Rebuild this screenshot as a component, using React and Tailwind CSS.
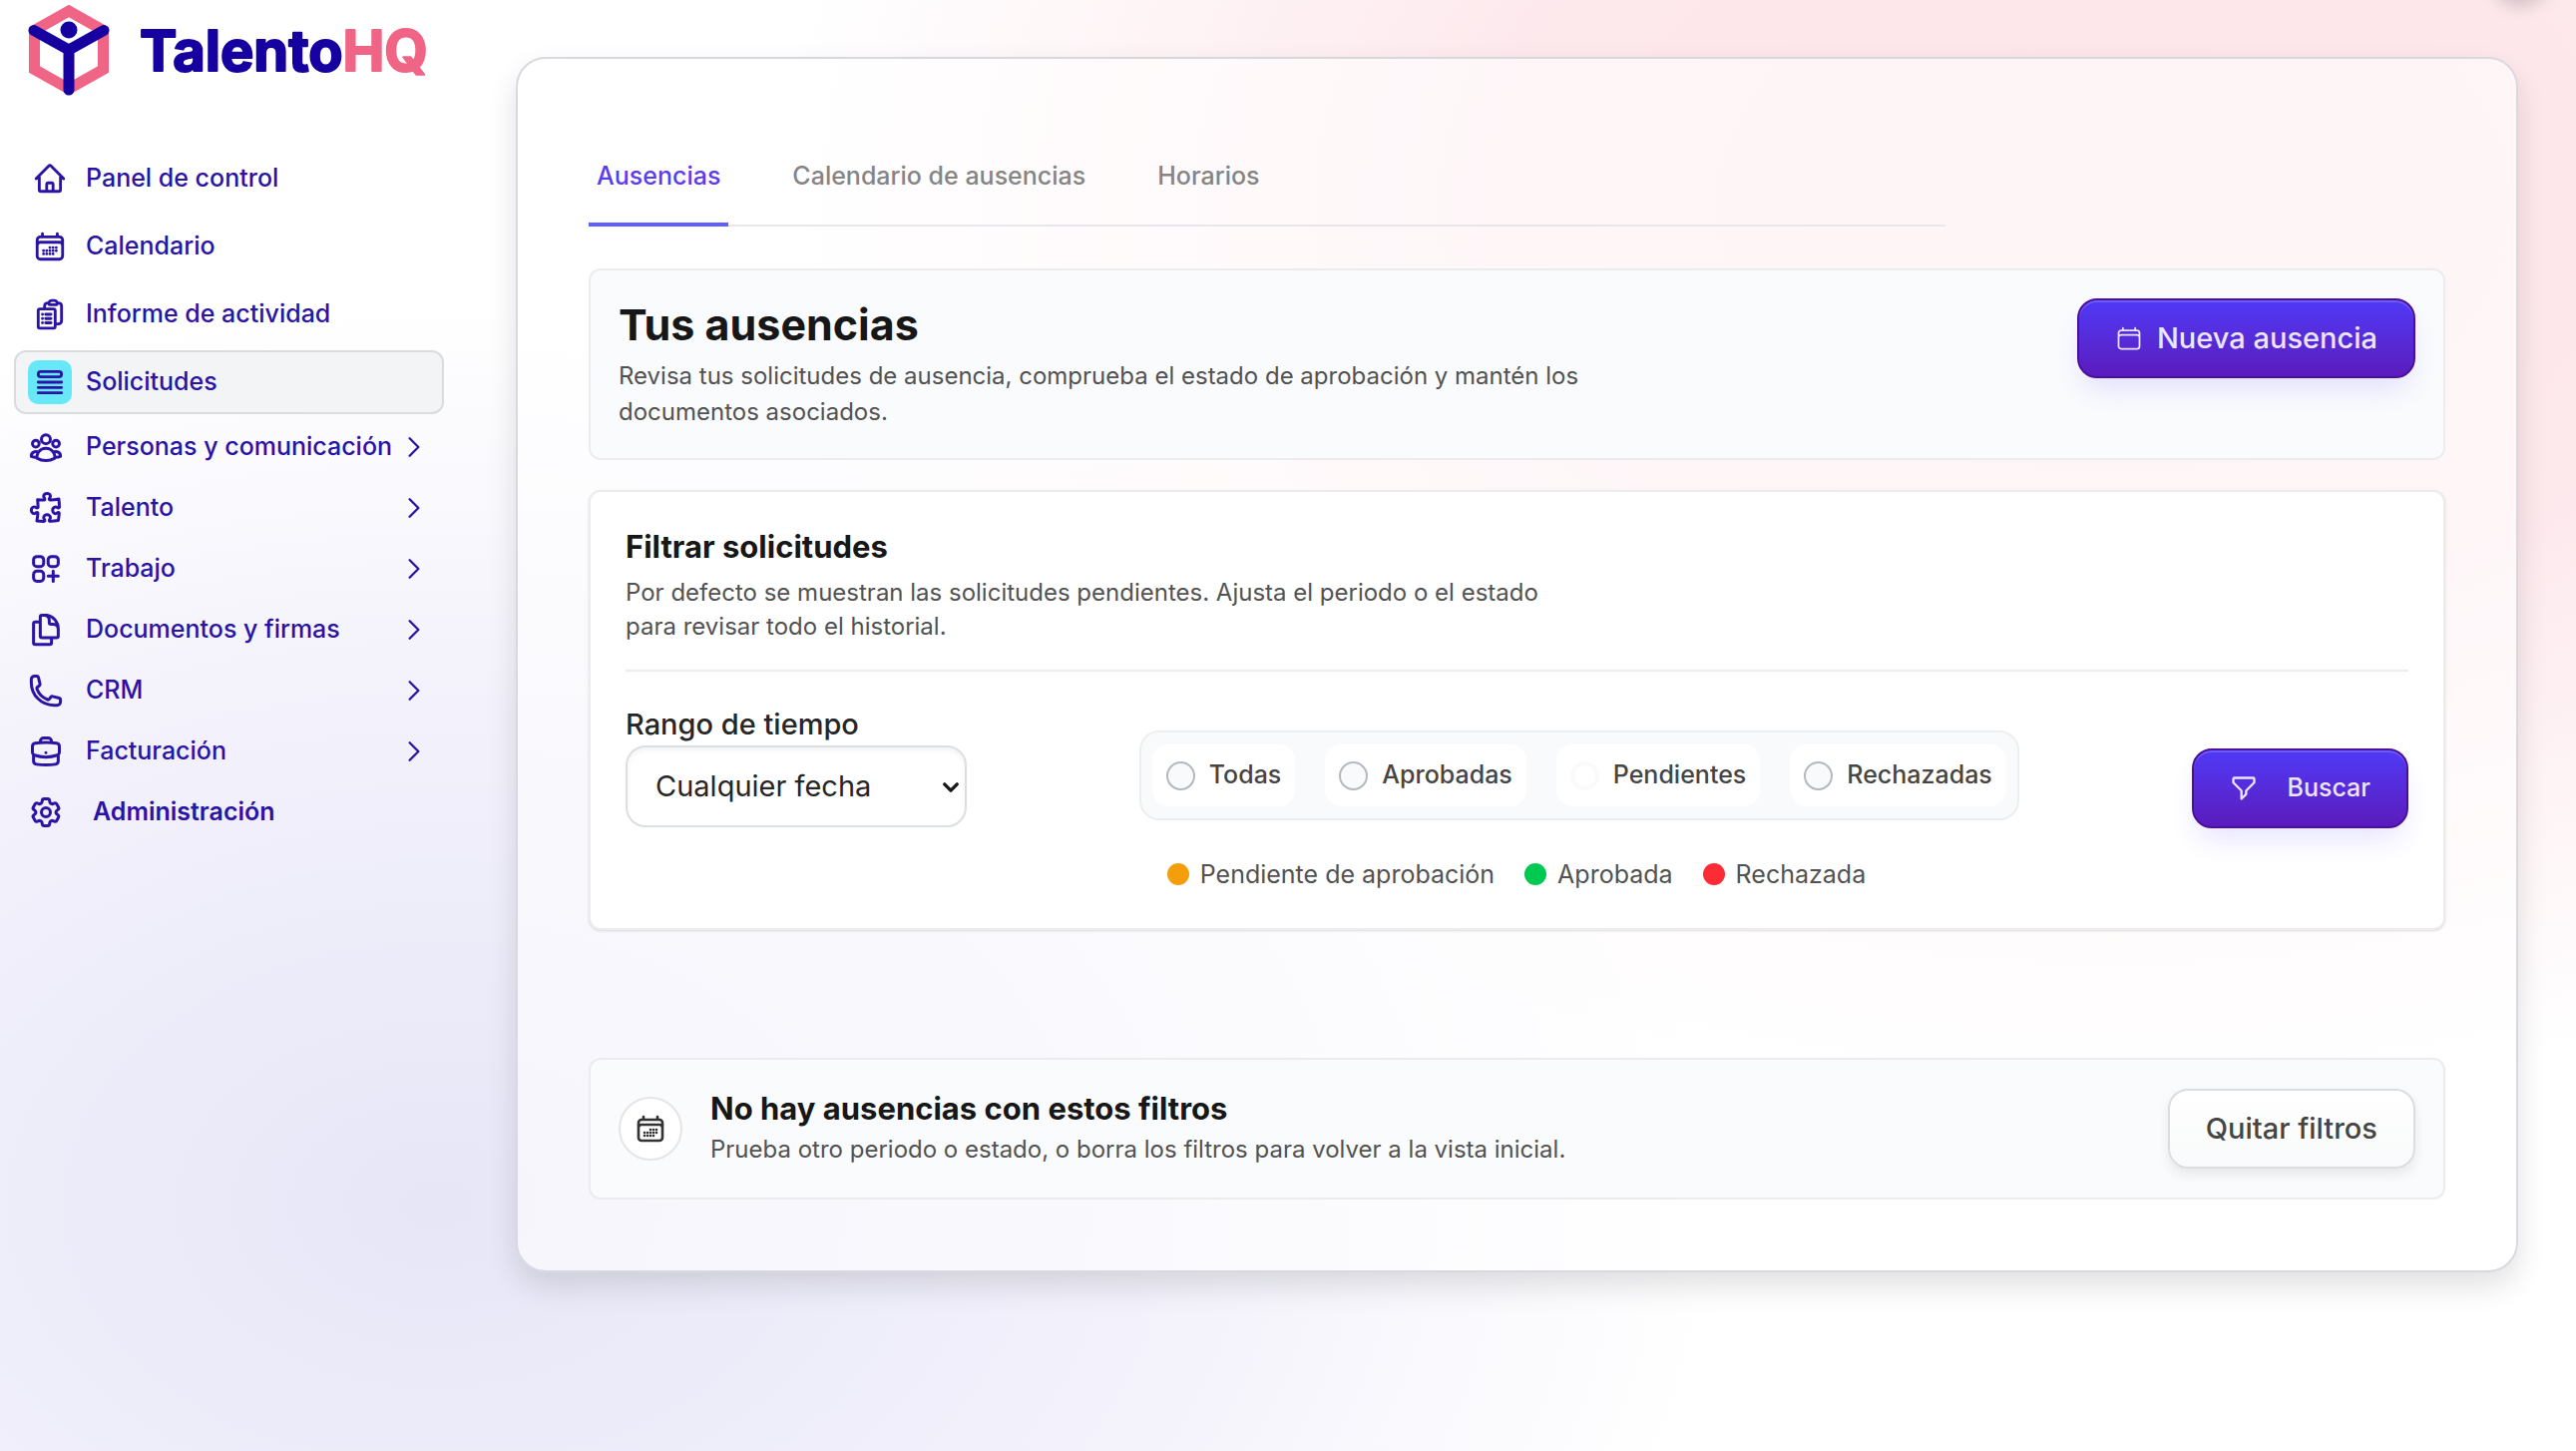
import { useState } from "react";
import {
  HiOutlineBriefcase,
  HiOutlineCalendar,
  HiOutlineCalendarDays,
  HiOutlineChevronDown,
  HiOutlineChevronRight,
  HiOutlineClipboardDocumentList,
  HiOutlineCog6Tooth,
  HiOutlineDocumentDuplicate,
  HiOutlineHome,
  HiOutlinePhone,
  HiOutlinePuzzlePiece,
  HiOutlineQueueList,
  HiOutlineSquaresPlus,
  HiOutlineUserGroup,
} from "react-icons/hi2";
import { HiOutlineFilter } from "react-icons/hi";

const LINKS = [
  { label: "Panel de control", icon: HiOutlineHome },
  { label: "Calendario", icon: HiOutlineCalendarDays },
  { label: "Informe de actividad", icon: HiOutlineClipboardDocumentList },
  { label: "Solicitudes", icon: HiOutlineQueueList, active: true },
];

const GROUPS = [
  { label: "Personas y comunicación", icon: HiOutlineUserGroup },
  { label: "Talento", icon: HiOutlinePuzzlePiece },
  { label: "Trabajo", icon: HiOutlineSquaresPlus },
  { label: "Documentos y firmas", icon: HiOutlineDocumentDuplicate },
  { label: "CRM", icon: HiOutlinePhone },
  { label: "Facturación", icon: HiOutlineBriefcase },
];

const TABS = ["Ausencias", "Calendario de ausencias", "Horarios"];

const STATUSES = ["Todas", "Aprobadas", "Pendientes", "Rechazadas"];

const LEGEND = [
  { label: "Pendiente de aprobación", dot: "bg-[#f59e0b]" },
  { label: "Aprobada", dot: "bg-[#00c951]" },
  { label: "Rechazada", dot: "bg-[#fb2c36]" },
];

const primaryButton =
  "flex items-center rounded-[20px] border-2 border-[#4b0f9c] bg-linear-to-b from-[#4f39f6] to-[#5a1bbd] font-medium text-[#ebe5ff] shadow-[inset_0_2px_0_rgba(255,255,255,0.18),0_16px_28px_-6px_rgba(79,57,246,0.14)]";

function Logo() {
  return (
    <a href="#" aria-label="TalentoHQ" className="block pl-7">
      <svg viewBox="0 0 410 92" className="h-[92px] w-[410px]" fill="none">
        <path d="M41 7 L75.500 26.500 V65.500 L41 85 L6.500 65.500 V26.500 Z" stroke="#f06585" strokeWidth="11" />
        <path d="M6 26.500 L41 46 L76 26.500 M41 46 V86" stroke="#1600a0" strokeWidth="11" strokeLinecap="round" strokeLinejoin="round" />
        <circle cx="41" cy="26" r="8.500" fill="#1600a0" />
        <text x="112" y="67" fontFamily="Inter, sans-serif" fontSize="56" fontWeight="700" strokeWidth="2" strokeLinejoin="round">
          <tspan fill="#1600a0" stroke="#1600a0">Talento</tspan>
          <tspan fill="#f06585" stroke="#f06585">HQ</tspan>
        </text>
      </svg>
    </a>
  );
}

function Sidebar() {
  return (
    <aside className="w-[460px] shrink-0 pt-1">
      <Logo />
      <nav className="mt-[51px] pr-[15px] pl-[14px] text-[25px] font-medium text-[#2a13a5]">
        <ul className="flex flex-col gap-1">
          {LINKS.map(({ label, icon: Icon, active }) => (
            <li key={label}>
              <a
                href="#"
                className={`flex h-16 items-center gap-[14px] rounded-xl border-2 px-3 ${
                  active ? "border-[#d9dcde] bg-[#f3f4f6]" : "border-transparent"
                }`}
              >
                <span className={`flex size-11 items-center justify-center rounded-[10px] ${active ? "bg-[#67e8f9]" : ""}`}>
                  <Icon strokeWidth={2} className="size-[34px]" />
                </span>
                {label}
              </a>
            </li>
          ))}
        </ul>
        <ul className="mt-0.5">
          {GROUPS.map(({ label, icon: Icon }) => (
            <li key={label}>
              <button className="flex h-[61px] w-full items-center pr-4 pl-[14px]">
                <Icon strokeWidth={2} className="mr-[22px] size-9 shrink-0" />
                {label}
                <HiOutlineChevronRight strokeWidth={2} className="ml-auto size-7 shrink-0" />
              </button>
            </li>
          ))}
          <li>
            <a href="#" className="flex h-[61px] items-center gap-[29px] pl-[14px] font-semibold">
              <HiOutlineCog6Tooth strokeWidth={2} className="size-9" />
              Administración
            </a>
          </li>
        </ul>
      </nav>
    </aside>
  );
}

function Tabs() {
  const [current, setCurrent] = useState(TABS[0]);

  return (
    <div role="tablist" className="flex w-[1360px] gap-14 border-b-2 border-[#e9e7ec]">
      {TABS.map((tab) => (
        <button
          key={tab}
          role="tab"
          aria-selected={tab === current}
          onClick={() => setCurrent(tab)}
          className={`-mb-0.5 h-[100px] border-b-4 px-2 pt-1 text-[25px] font-medium ${
            tab === current ? "border-[#615fff] text-[#5b3df0]" : "border-transparent text-[#858585]"
          }`}
        >
          {tab}
        </button>
      ))}
    </div>
  );
}

function Filters() {
  const [status, setStatus] = useState("Pendientes");

  return (
    <section className="mt-[30px] rounded-xl border-2 border-[#ececef] bg-white px-[35px] pt-[34px] pb-9 shadow-sm">
      <h2 className="text-[31px] leading-[42px] font-bold text-[#171717]">Filtrar solicitudes</h2>
      <p className="mt-2 max-w-[960px] text-[24px] leading-[34px] text-[#525252]">
        Por defecto se muestran las solicitudes pendientes. Ajusta el periodo o el estado para revisar todo el historial.
      </p>
      <form className="mt-[26px] flex items-start justify-between border-t-2 border-[#ececef] pt-8" onSubmit={(e) => e.preventDefault()}>
        <div className="flex flex-col">
          <label htmlFor="rango" className="text-[29px] leading-[42px] font-medium text-[#262626]">Rango de tiempo</label>
          <div className="relative">
            <select
              id="rango"
              className="h-[82px] w-[342px] appearance-none rounded-[20px] border-2 border-[#dcdfe2] bg-white pr-10 pl-7 text-[29px] text-[#262626] shadow-[inset_0_3px_5px_rgba(0,0,0,0.05)]"
            >
              <option>Cualquier fecha</option>
            </select>
            <HiOutlineChevronDown strokeWidth={4} className="pointer-events-none absolute top-8 right-1.5 size-5 text-[#171717]" />
          </div>
        </div>

        <div className="mt-[27px]">
          <div role="radiogroup" aria-label="Estado" className="flex gap-[30px] rounded-[20px] border-2 border-[#eceef0] bg-[#f9fafb] px-[11px] py-3">
            {STATUSES.map((item) => (
              <label key={item} className="flex h-[62px] items-center gap-[14px] rounded-2xl bg-white px-[14px] text-[25px] font-medium text-[#454545]">
                <input
                  type="radio"
                  name="estado"
                  checked={status === item}
                  onChange={() => setStatus(item)}
                  className="size-[29px] appearance-none rounded-full border-2 border-[#b4b8bf] bg-[#f9fafb] checked:border-4 checked:border-[#fafafa] checked:bg-white"
                />
                {item}
              </label>
            ))}
          </div>
          <ul className="mt-9 flex gap-[30px] pl-7 text-[25px] leading-9 text-[#525252]">
            {LEGEND.map(({ label, dot }) => (
              <li key={label} className="flex items-center gap-[11px]">
                <span className={`size-[22px] rounded-full ${dot}`} />
                {label}
              </li>
            ))}
          </ul>
        </div>

        <button className={`${primaryButton} mt-[45px] h-20 gap-[30px] px-9 text-[25px]`}>
          <HiOutlineFilter className="size-7" />
          Buscar
        </button>
      </form>
    </section>
  );
}

export default function App() {
  return (
    <div className="relative flex min-h-screen overflow-hidden bg-white bg-[radial-gradient(ellipse_52%_62%_at_82%_14%,#fde6ea_0%,#fde8ec_45%,transparent_100%),radial-gradient(ellipse_50%_62%_at_17%_83%,#e7e6f7_0%,#f1f0fb_50%,transparent_100%)] font-[Inter,sans-serif]">
      <Sidebar />

      <main className="mt-[57px] mr-[58px] ml-[57px] flex-1 self-start rounded-[30px] border-2 border-[#d9d8e0] bg-white/60 px-[71px] pt-[68px] pb-[71px] shadow-[0_14px_30px_rgba(0,0,0,0.12)]">
        <Tabs />

        <section className="mt-[42px] flex items-start justify-between rounded-xl border-2 border-[#ececef] bg-[#fafbfd] p-7">
          <div>
            <h1 className="text-[43px] leading-[52px] font-bold text-[#171717]">Tus ausencias</h1>
            <p className="mt-2 max-w-[1000px] text-[24px] leading-9 text-[#525252]">
              Revisa tus solicitudes de ausencia, comprueba el estado de aprobación y mantén los documentos asociados.
            </p>
          </div>
          <button className={`${primaryButton} h-20 gap-[14px] px-9 text-[29px]`}>
            <HiOutlineCalendar className="size-7" />
            Nueva ausencia
          </button>
        </section>

        <Filters />

        <section className="mt-32 flex items-center rounded-xl border-2 border-[#ececef] bg-[#fafbfd] p-7">
          <span className="flex size-16 items-center justify-center rounded-full border-2 border-[#e5e5e8] bg-white text-[#333]">
            <HiOutlineCalendarDays strokeWidth={2} className="size-8" />
          </span>
          <div className="ml-7">
            <h2 className="text-[31px] leading-[42px] font-bold text-[#171717]">No hay ausencias con estos filtros</h2>
            <p className="text-[24px] leading-10 text-[#525252]">Prueba otro periodo o estado, o borra los filtros para volver a la vista inicial.</p>
          </div>
          <button className="ml-auto h-20 rounded-[20px] border-2 border-[#dcdde0] bg-linear-to-b from-white to-[#f9fafb] px-9 text-[29px] font-medium text-[#454545] shadow-[0_6px_12px_rgba(0,0,0,0.08)]">
            Quitar filtros
          </button>
        </section>
      </main>

      <div className="absolute -top-14 right-7 size-14 rounded-full shadow-[0_6px_18px_rgba(0,0,0,0.18)]" />
    </div>
  );
}
